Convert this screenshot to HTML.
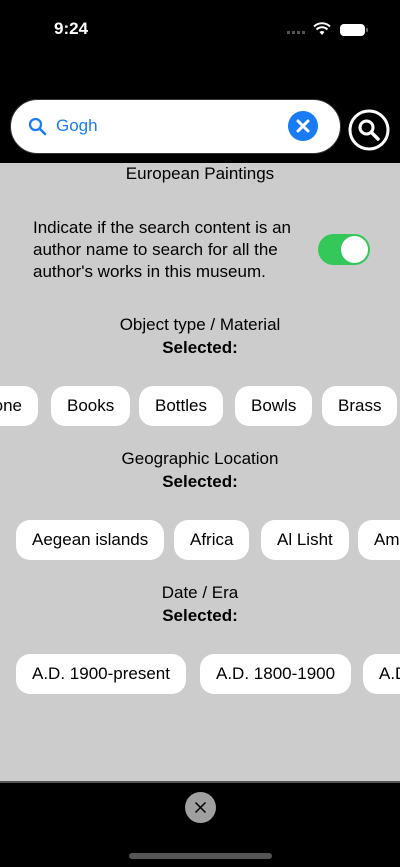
<!DOCTYPE html>
<html><head><meta charset="utf-8"><style>
*{margin:0;padding:0;box-sizing:border-box}
body{width:400px;height:867px;background:#000;position:relative;overflow:hidden;font-family:"Liberation Sans",sans-serif;color:#000}
.abs{position:absolute}
.gray{position:absolute;left:0;top:163px;width:400px;height:618px;background:#cccccc}
.c{position:absolute;left:0;width:400px;text-align:center;font-size:17px}
.chip{position:absolute;height:40px;background:#fff;border-radius:14px;font-size:17px;line-height:40px;padding:0 16px;white-space:nowrap}
</style></head><body>
<div class="abs" style="left:54px;top:19px;color:#fff;font-weight:bold;font-size:17px">9:24</div>
<div class="abs" style="left:287px;top:31px;width:20px;height:3px;background:repeating-linear-gradient(90deg,#555 0 3px,transparent 3px 5px)"></div>
<svg class="abs" style="left:313px;top:22px" width="18" height="14" viewBox="0 0 18 14"><path d="M9 13 L6.5 10 A4 4 0 0 1 11.5 10Z" fill="#fff"/><path d="M3.5 7.5 A8 8 0 0 1 14.5 7.5" stroke="#fff" stroke-width="2" fill="none"/><path d="M1 4.5 A11.5 11.5 0 0 1 17 4.5" stroke="#fff" stroke-width="2" fill="none"/></svg>
<div class="abs" style="left:340px;top:24px;width:25px;height:12px;background:#fff;border-radius:4px"></div>
<div class="abs" style="left:366px;top:28px;width:2px;height:4px;background:#666;border-radius:1px"></div>
<div class="abs" style="left:10px;top:99px;width:331px;height:55px;background:#fff;border-radius:28px;border:1px solid #333"></div>
<svg class="abs" style="left:28px;top:117px" width="19" height="19" viewBox="0 0 19 19"><circle cx="7.5" cy="7.5" r="5.5" stroke="#1a7cf5" stroke-width="2.3" fill="none"/><path d="M11.5 11.5 L17 17" stroke="#1a7cf5" stroke-width="2.5" stroke-linecap="round"/></svg>
<div class="abs" style="left:56px;top:116px;font-size:17px;color:#1a7cf5">Gogh</div>
<div class="abs" style="left:288px;top:111px;width:30px;height:30px;border-radius:50%;background:#1a7cf5"></div>
<svg class="abs" style="left:288px;top:111px" width="30" height="30"><path d="M10 10 L20 20 M20 10 L10 20" stroke="#fff" stroke-width="3" stroke-linecap="round"/></svg>
<svg class="abs" style="left:348px;top:109px" width="42" height="42" viewBox="0 0 42 42"><circle cx="21" cy="21" r="19" stroke="#fff" stroke-width="3" fill="#000"/><circle cx="18.5" cy="18.5" r="6.5" stroke="#fff" stroke-width="3" fill="none"/><path d="M23.5 23.5 L30 30" stroke="#fff" stroke-width="3.5" stroke-linecap="round"/></svg>
<div class="gray"></div>
<div class="c" style="top:164px">European Paintings</div>
<div class="abs" style="left:33px;top:217px;font-size:17px;line-height:22px;width:285px">Indicate if the search content is an author name to search for all the author's works in this museum.</div>
<div class="abs" style="left:318px;top:234px;width:52px;height:31px;border-radius:16px;background:#34c759"></div>
<div class="abs" style="left:341px;top:236px;width:27px;height:27px;border-radius:50%;background:#fff"></div>
<div class="c" style="top:315px">Object type / Material</div>
<div class="c" style="top:338px;font-weight:bold">Selected:</div>
<div class="chip" style="left:-40px;top:386px;width:78px;text-align:right">one</div>
<div class="chip" style="left:51px;top:386px">Books</div>
<div class="chip" style="left:139px;top:386px">Bottles</div>
<div class="chip" style="left:235px;top:386px">Bowls</div>
<div class="chip" style="left:322px;top:386px">Brass</div>
<div class="c" style="top:449px">Geographic Location</div>
<div class="c" style="top:472px;font-weight:bold">Selected:</div>
<div class="chip" style="left:16px;top:520px">Aegean islands</div>
<div class="chip" style="left:174px;top:520px">Africa</div>
<div class="chip" style="left:261px;top:520px">Al Lisht</div>
<div class="chip" style="left:358px;top:520px">Am</div>
<div class="c" style="top:583px">Date / Era</div>
<div class="c" style="top:606px;font-weight:bold">Selected:</div>
<div class="chip" style="left:16px;top:654px">A.D. 1900-present</div>
<div class="chip" style="left:200px;top:654px">A.D. 1800-1900</div>
<div class="chip" style="left:363px;top:654px">A.D</div>
<div class="abs" style="left:0;top:781px;width:400px;height:2px;background:#555"></div>
<div class="abs" style="left:185px;top:792px;width:31px;height:31px;border-radius:50%;background:#a0a0a0"></div>
<svg class="abs" style="left:185px;top:792px" width="31" height="31"><path d="M10.5 10.5 L20.5 20.5 M20.5 10.5 L10.5 20.5" stroke="#000" stroke-width="1.5"/></svg>
<div class="abs" style="left:129px;top:853px;width:143px;height:6px;border-radius:3px;background:#555"></div>
</body></html>
